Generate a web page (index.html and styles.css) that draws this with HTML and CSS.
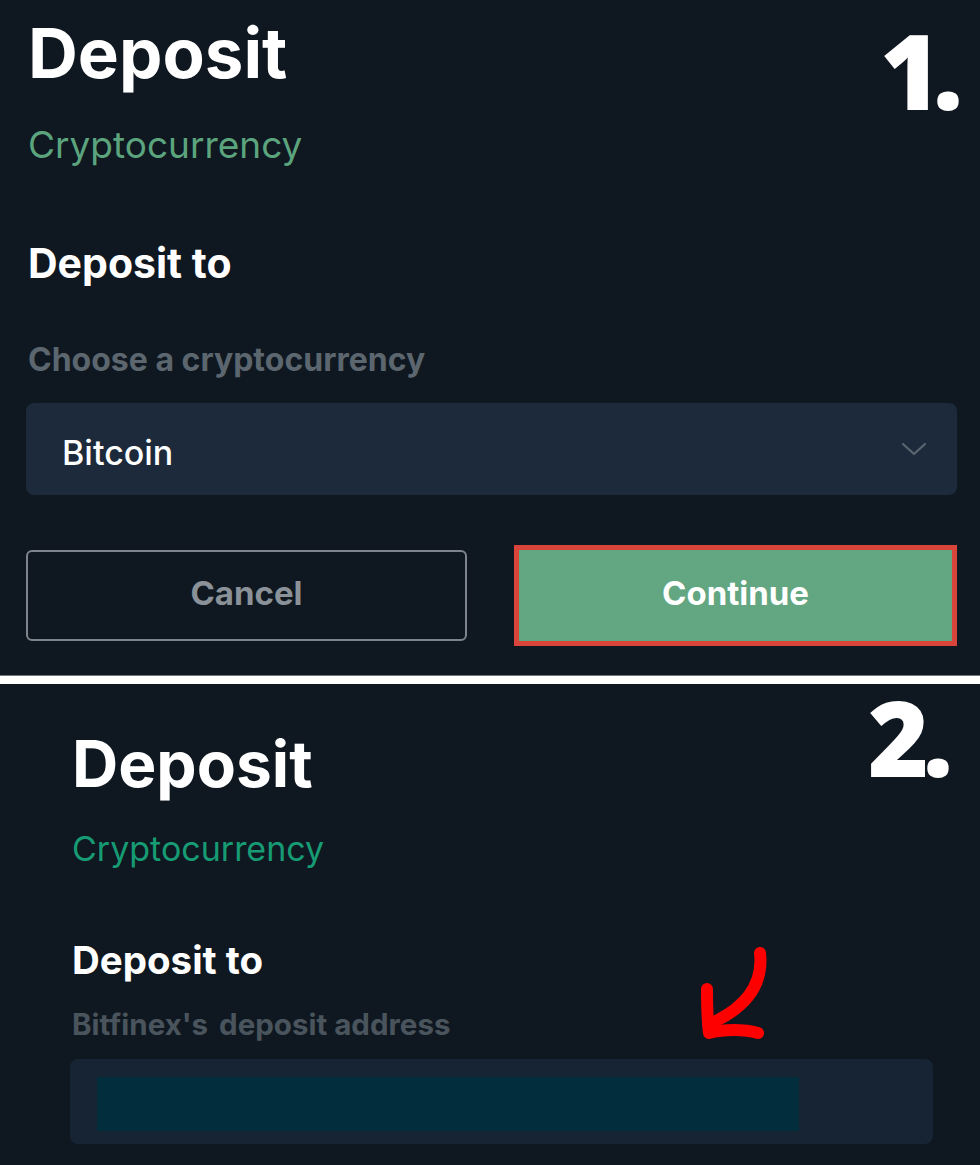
FILE: index.html
```html
<!DOCTYPE html>
<html lang="en">
<head>
    <meta charset="UTF-8">
    <meta name="viewport" content="width=device-width, initial-scale=1.0">
    <title>Deposit</title>
    <link rel="stylesheet" href="styles.css">
</head>
<body>
    <!-- Step 1 -->
    <section class="step step-one">
        <div class="step-num">1.</div>
        <h1 class="title">Deposit</h1>
        <div class="subtitle">Cryptocurrency</div>
        <h2 class="heading">Deposit to</h2>
        <div class="label">Choose a cryptocurrency</div>
        <div class="select">
            <span>Bitcoin</span>
            <svg class="chevron" width="26" height="16" viewBox="0 0 26 16">
                <path d="M2 3 L13 13 L24 3" fill="none" stroke="#5b6570" stroke-width="2.2" stroke-linecap="round" stroke-linejoin="round"/>
            </svg>
        </div>
        <div class="buttons">
            <button class="btn btn-cancel">Cancel</button>
            <button class="btn btn-continue">Continue</button>
        </div>
    </section>

    <div class="divider"></div>

    <!-- Step 2 -->
    <section class="step step-two">
        <div class="step-num">2.</div>
        <h1 class="title">Deposit</h1>
        <div class="subtitle">Cryptocurrency</div>
        <h2 class="heading">Deposit to</h2>
        <div class="label">Bitfinex's <span class="gap"></span>deposit address</div>
        <div class="address">
            <div class="address-value"></div>
        </div>
        <svg class="arrow" width="90" height="110" viewBox="0 0 90 110">
            <path d="M66 8 C69 34 58 58 22 76" fill="none" stroke="#ff0000" stroke-width="12" stroke-linecap="round"/>
            <path d="M13 44 C13 60 13 72 15 88 C30 84 50 84 64 88" fill="none" stroke="#ff0000" stroke-width="12" stroke-linecap="round" stroke-linejoin="round"/>
        </svg>
    </section>
</body>
</html>
```

FILE: styles.css
```css
body {
    margin: 0;
    background-color: #0f1820;
    font-family: Inter, "Noto Sans", sans-serif;
    color: #ffffff;
    height: 1165px;
    overflow: hidden;
}

.step {
    position: relative;
}

.step-one {
    padding: 19px 23px 29px 28px;
}

.step-two {
    padding: 48px 47px 0 72px;
}

/* big hand-added step numbers */
.step-num {
    position: absolute;
    font-family: "Open Sans", sans-serif;
    font-weight: 800;
    font-size: 104px;
    line-height: 1;
    letter-spacing: -8px;
    color: #ffffff;
}

.step-one .step-num {
    top: 18px;
    right: 25px;
}

.step-two .step-num {
    top: 1px;
    right: 33px;
    letter-spacing: -6px;
}

.title {
    margin: 0;
    font-size: 69px;
    font-weight: 700;
    line-height: 1;
}

.subtitle {
    margin-top: 38px;
    font-size: 37px;
    line-height: 1;
    color: #5ba47e;
}

.heading {
    margin: 80px 0 0;
    font-size: 41px;
    font-weight: 700;
    line-height: 1;
}

.label {
    margin-top: 60px;
    font-size: 32px;
    font-weight: 700;
    line-height: 1;
    color: #5c666f;
}

.select {
    margin: 27px 0 0 -2px;
    height: 92px;
    box-sizing: border-box;
    background-color: #1c2a3b;
    border-radius: 8px;
    display: flex;
    align-items: center;
    justify-content: space-between;
    padding: 6px 30px 0 36px;
    font-size: 34px;
    font-weight: 500;
}

.chevron {
    display: block;
    margin-top: -6px;
}

.buttons {
    margin: 50px 0 0 -2px;
    display: grid;
    grid-template-columns: 441px 443px;
    column-gap: 47px;
    align-items: center;
}

.btn {
    font-family: Inter, "Noto Sans", sans-serif;
    font-size: 33px;
    font-weight: 700;
    border-radius: 6px;
    padding-bottom: 6px;
    cursor: pointer;
}

.btn-cancel {
    height: 91px;
    background: transparent;
    border: 2px solid #7d848b;
    color: #8a9198;
}

.btn-continue {
    height: 101px;
    background-color: #63a682;
    border: 5px solid #d9443b;
    border-radius: 0;
    color: #ffffff;
}

.divider {
    height: 8px;
    background-color: #ffffff;
    border-top: 1px solid #6f7780;
}

.step-two .title {
    font-size: 64px;
}

.step-two .subtitle {
    margin-top: 36px;
    font-size: 34px;
    color: #179b74;
}

.step-two .heading {
    margin-top: 75px;
    font-size: 38.5px;
}

.step-two .label {
    margin-top: 30px;
    font-size: 29.5px;
    color: #4a545d;
}

.gap {
    display: inline-block;
    width: 4px;
}

.address {
    margin: 20px 0 0 -2px;
    height: 85px;
    box-sizing: border-box;
    padding: 18px 27px;
    background-color: #172433;
    border-radius: 8px;
}

.address-value {
    width: 702px;
    height: 54px;
    background-color: #022d3c;
}

/* red marker arrow drawn over the screenshot */
.arrow {
    position: absolute;
    left: 694px;
    top: 261px;
}
```
